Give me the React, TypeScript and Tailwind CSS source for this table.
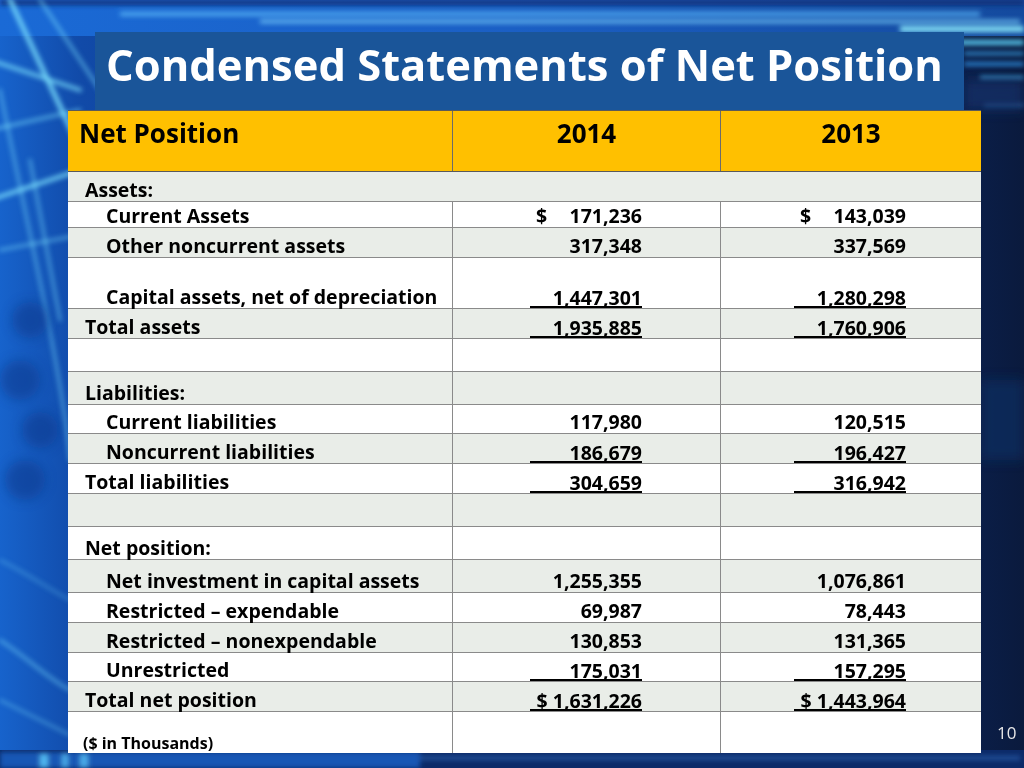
import React from "react";

type Amount = { text: string; dollar?: boolean; ul?: boolean };

type Row = {
  label: string;
  indent?: boolean;
  h: string;
  gray?: boolean;
  span?: boolean;
  note?: boolean;
  last?: boolean;
  a?: Amount;
  b?: Amount;
};

const rows: Row[] = [
  { label: "Assets:", h: "h-[30px]", gray: true, span: true },
  { label: "Current Assets", indent: true, h: "h-[26px]", a: { text: "171,236", dollar: true }, b: { text: "143,039", dollar: true } },
  { label: "Other noncurrent assets", indent: true, h: "h-[30px]", gray: true, a: { text: "317,348" }, b: { text: "337,569" } },
  { label: "Capital assets, net of depreciation", indent: true, h: "h-[51px]", a: { text: "1,447,301", ul: true }, b: { text: "1,280,298", ul: true } },
  { label: "Total assets", h: "h-[30px]", gray: true, a: { text: "1,935,885", ul: true }, b: { text: "1,760,906", ul: true } },
  { label: "", h: "h-[33px]" },
  { label: "Liabilities:", h: "h-[33px]", gray: true },
  { label: "Current liabilities", indent: true, h: "h-[29px]", a: { text: "117,980" }, b: { text: "120,515" } },
  { label: "Noncurrent liabilities", indent: true, h: "h-[30px]", gray: true, a: { text: "186,679", ul: true }, b: { text: "196,427", ul: true } },
  { label: "Total liabilities", h: "h-[30px]", a: { text: "304,659", ul: true }, b: { text: "316,942", ul: true } },
  { label: "", h: "h-[33px]", gray: true },
  { label: "Net position:", h: "h-[33px]" },
  { label: "Net investment in capital assets", indent: true, h: "h-[33px]", gray: true, a: { text: "1,255,355" }, b: { text: "1,076,861" } },
  { label: "Restricted – expendable", indent: true, h: "h-[30px]", a: { text: "69,987" }, b: { text: "78,443" } },
  { label: "Restricted – nonexpendable", indent: true, h: "h-[30px]", gray: true, a: { text: "130,853" }, b: { text: "131,365" } },
  { label: "Unrestricted", indent: true, h: "h-[29px]", a: { text: "175,031", ul: true }, b: { text: "157,295", ul: true } },
  { label: "Total net position", h: "h-[30px]", gray: true, a: { text: "$ 1,631,226", ul: true }, b: { text: "$ 1,443,964", ul: true } },
  { label: "($ in Thousands)", h: "h-[41px]", note: true, last: true },
];

function AmountCell({ value }: { value?: Amount }) {
  if (!value) return null;
  if (value.dollar) {
    return (
      <span className="inline-flex w-[106px] justify-between leading-[20px] pb-[1px]">
        <span>$</span>
        <span>{value.text}</span>
      </span>
    );
  }
  if (value.ul) {
    return (
      <span className="inline-block w-[112px] border-b-2 border-black text-right leading-[17px]">
        {value.text}
      </span>
    );
  }
  return <span className="inline-block leading-[20px] pb-[1px]">{value.text}</span>;
}

function Background() {
  return (
    <svg className="absolute inset-0" width="1024" height="768" viewBox="0 0 1024 768">
      <defs>
        <linearGradient id="base" x1="0" y1="0" x2="1" y2="0">
          <stop offset="0" stopColor="#1763cc" />
          <stop offset="0.08" stopColor="#114aa8" />
          <stop offset="0.5" stopColor="#0c3277" />
          <stop offset="0.92" stopColor="#0b2150" />
          <stop offset="1" stopColor="#0a1a3d" />
        </linearGradient>
        <linearGradient id="topband" x1="0" y1="0" x2="1" y2="0">
          <stop offset="0" stopColor="#1a6ad6" />
          <stop offset="0.5" stopColor="#1b5fc4" />
          <stop offset="1" stopColor="#144a9e" />
        </linearGradient>
        <filter id="soft">
          <feGaussianBlur stdDeviation="2.5" />
        </filter>
        <filter id="softer">
          <feGaussianBlur stdDeviation="6" />
        </filter>
      </defs>
      <rect width="1024" height="768" fill="url(#base)" />
      <rect x="0" y="0" width="1024" height="36" fill="url(#topband)" />
      <g filter="url(#soft)" opacity="0.9">
        <rect x="0" y="0" width="1024" height="5" fill="#0d2c6e" />
        <rect x="120" y="12" width="860" height="4" fill="#58b4f5" />
        <rect x="260" y="20" width="760" height="3" fill="#7fd6ff" />
        <rect x="900" y="26" width="124" height="6" fill="#8ff0ff" />
        <rect x="960" y="40" width="64" height="5" fill="#5fd8ff" />
        <rect x="964" y="52" width="60" height="3" fill="#3aa8f0" />
        <rect x="964" y="62" width="60" height="4" fill="#2f8ee0" />
        <rect x="980" y="76" width="44" height="3" fill="#48b8f5" />
        <rect x="984" y="104" width="40" height="2" fill="#3c9de8" />
      </g>
      <g filter="url(#softer)" opacity="0.7">
        <rect x="964" y="80" width="60" height="30" fill="#12306a" />
        <rect x="980" y="380" width="44" height="80" fill="#0f2d60" />
      </g>
      <g filter="url(#soft)" stroke="#7fe6ff" fill="none" strokeLinecap="round">
        <path d="M 10 0 L 90 170" strokeWidth="5" opacity="0.8" />
        <path d="M 40 0 L 120 120" strokeWidth="3" opacity="0.6" />
        <path d="M -10 60 L 80 90" strokeWidth="4" opacity="0.7" />
        <path d="M -10 130 L 80 110" strokeWidth="3" opacity="0.6" />
        <path d="M -10 200 L 80 170" strokeWidth="4" opacity="0.8" />
        <path d="M 0 250 L 80 235" strokeWidth="3" opacity="0.5" />
        <path d="M 30 160 L 60 320" strokeWidth="3" opacity="0.5" />
        <path d="M 0 90 C 30 240 60 360 70 460" strokeWidth="3" opacity="0.5" />
        <path d="M 0 560 C 30 575 50 590 70 600" strokeWidth="2" opacity="0.4" />
        <path d="M 0 640 C 30 660 50 680 70 690" strokeWidth="3" opacity="0.5" />
        <path d="M 0 700 C 30 715 50 725 70 735" strokeWidth="2" opacity="0.5" />
      </g>
      <g filter="url(#softer)" opacity="0.5">
        <circle cx="30" cy="320" r="18" fill="#0b3686" />
        <circle cx="20" cy="380" r="20" fill="#0b3686" />
        <circle cx="40" cy="430" r="18" fill="#0b3686" />
        <circle cx="25" cy="480" r="20" fill="#0b3686" />
      </g>
      <rect x="0" y="750" width="1024" height="18" fill="#0c2a68" />
      <g filter="url(#soft)">
        <rect x="0" y="752" width="420" height="16" fill="#1d63c8" opacity="0.8" />
        <rect x="40" y="754" width="8" height="14" fill="#5fd0ff" opacity="0.8" />
        <rect x="62" y="754" width="6" height="14" fill="#5fd0ff" opacity="0.7" />
        <rect x="80" y="754" width="8" height="14" fill="#5fd0ff" opacity="0.7" />
        <rect x="420" y="756" width="600" height="4" fill="#3a7ad0" opacity="0.5" />
      </g>
    </svg>
  );
}

export default function App() {
  return (
    <div className="relative w-[1024px] h-[768px] overflow-hidden bg-[#0b2560] font-['Open_Sans',sans-serif]">
      <Background />
      <div className="relative flex flex-col pt-[32px]">
        <div className="ml-[95px] w-[869px] h-[78px] bg-[#1a5599] pl-[11px] pt-[10px]">
          <h1 className="text-[43.5px] leading-[46px] font-bold text-white">Condensed Statements of Net Position</h1>
        </div>
        <div className="flex">
          <div className="ml-[68px] w-[913px] text-[19.5px] font-bold text-black">
            <div className="grid grid-cols-[385px_268px_260px] h-[62px] bg-[#ffc000] border-t border-b border-[#5a5a5a] text-[26px] leading-[27px]">
              <div className="border-r border-[#6b6b6b] pl-[11px] pt-[9px]">Net Position</div>
              <div className="border-r border-[#6b6b6b] pt-[9px] text-center">2014</div>
              <div className="pt-[9px] text-center">2013</div>
            </div>
            {rows.map((r, i) => (
              <div
                key={i}
                className={`grid grid-cols-[385px_268px_260px] ${r.h} ${r.gray ? "bg-[#e9ede8]" : "bg-white"} ${r.last ? "" : "border-b border-[#8a8a8a]"}`}
              >
                <div
                  className={`${r.span ? "col-span-2" : "border-r border-[#8a8a8a]"} flex items-end ${r.indent ? "pl-[38px]" : r.note ? "pl-[15px]" : "pl-[17px]"} ${r.note ? "pb-[2px] text-[16px] leading-[16px]" : "pb-[1px] leading-[20px]"}`}
                >
                  {r.label}
                </div>
                {!r.span && (
                  <div className="border-r border-[#8a8a8a] flex items-end justify-end pr-[78px]">
                    <AmountCell value={r.a} />
                  </div>
                )}
                <div className="flex items-end justify-end pr-[75px]">
                  <AmountCell value={r.b} />
                </div>
              </div>
            ))}
          </div>
          <div className="self-end ml-[16px] mb-[12px] text-[17px] leading-[17px] text-[#e6e6e6]">10</div>
        </div>
      </div>
    </div>
  );
}
